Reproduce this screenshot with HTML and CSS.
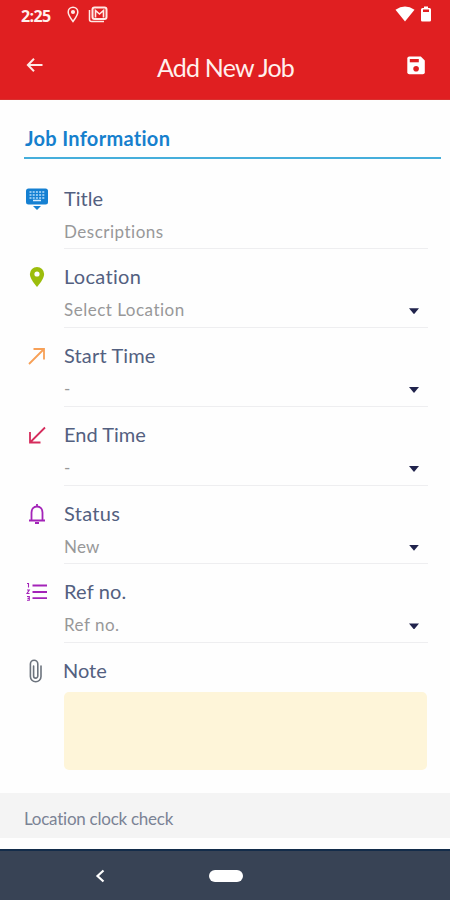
FILE: index.html
```
<!DOCTYPE html>
<html lang="en">
<head>
<meta charset="utf-8">
<title>Add New Job</title>
<link rel="stylesheet" href="styles.css">
</head>
<body>
<header class="top">
  <div class="status">
    <span class="clock">2:25</span>
    <svg class="s-pin" width="12" height="17" viewBox="0 0 12 17" fill="none" stroke="#ffe9e5" stroke-width="1.5"><path d="M6 15.5C3 11.5 1.2 9 1.2 6a4.8 4.8 0 0 1 9.6 0c0 3-1.800 5.500-4.800 9.500Z"/><circle cx="6" cy="6" r="1.300" fill="#ffe9e5"/></svg>
    <svg class="s-mail" width="20" height="17" viewBox="0 0 20 17" fill="none" stroke="#ffe9e5"><path d="M1.500 4v9.500q0 2 2 2H16" stroke-width="1.500"/><rect x="4.500" y="1.500" width="14" height="11.500" rx="2" stroke-width="2"/><path d="M7.500 11.500V4.500l4 3.500 4-3.500v7" stroke-width="1.600"/></svg>
    <svg class="s-wifi" width="20" height="16" viewBox="0 0 20 16" fill="#fff"><path d="M.5 3.800Q10-3 19.500 3.800L10 15.600Z"/></svg>
    <svg class="s-batt" width="10" height="16" viewBox="0 0 10 16"><path d="M3 .5h4V2h1.500Q10 2 10 3.500v10.700q0 1.300-1.300 1.300H1.300Q0 15.500 0 14.200V3.500Q0 2 1.500 2H3Z" fill="#fff"/><rect x="2" y="3.500" width="6" height="2.500" fill="#e01f21"/></svg>
  </div>
  <div class="bar">
    <svg class="back" width="18" height="16" viewBox="0 0 18 16" fill="none" stroke="#ffe9e5" stroke-width="2"><path d="M16.500 8H2M8 1.800 1.900 8 8 14.200"/></svg>
    <h1>Add New Job</h1>
    <svg class="save" width="18" height="19" viewBox="0 0 18 19"><path d="M2.300.5h11.500L17.800 4.500v11.700q0 2-2 2H2.300q-2 0-2-2V2.500q0-2 2-2Z" fill="#fff"/><rect x="2.800" y="3" width="9" height="3.300" fill="#e01f21"/><circle cx="9.100" cy="12.800" r="2.800" fill="#e01f21"/></svg>
  </div>
</header>
<main>
  <h2><span>Job Information</span></h2>
  <section class="row">
    <svg class="icon" width="24" height="24" viewBox="0 0 24 24"><rect x="1" y="1.500" width="22" height="16" rx="2.500" fill="#1580d2"/><path d="M8 19h8L12 23Z" fill="#1580d2"/><path d="M4.500 5h15M4.500 8h15M4.500 11h15" stroke="#8fc6f1" stroke-width="2" stroke-dasharray="2 1.200"/><path d="M8 13.500h8" stroke="#d8edff" stroke-width="1.500"/></svg>
    <div class="field"><div class="label">Title</div><div class="value v-desc">Descriptions</div></div>
  </section>
  <section class="row">
    <svg class="icon" width="24" height="24" viewBox="0 0 24 24"><path d="M12 22C7.500 16.500 4.900 12.500 4.900 9a7.100 7.100 0 0 1 14.200 0c0 3.500-2.600 7.500-7.100 13Z" fill="#9cbd0c"/><circle cx="12" cy="9" r="2.600" fill="#fff"/></svg>
    <div class="field"><div class="label l-loc">Location</div><div class="value v-loc">Select Location<i class="caret"></i></div></div>
  </section>
  <section class="row">
    <svg class="icon" width="24" height="24" viewBox="0 0 24 24" fill="none" stroke="#f7a057" stroke-width="1.800"><path d="M4 20 19 5M8.500 5H19v10.500"/></svg>
    <div class="field"><div class="label l-time">Start Time</div><div class="value">-<i class="caret"></i></div></div>
  </section>
  <section class="row">
    <svg class="icon" width="24" height="24" viewBox="0 0 24 24" fill="none" stroke="#d52c5c" stroke-width="1.800"><path d="M20 4.500 5 19.500M5 9v10.500h10.500"/></svg>
    <div class="field"><div class="label">End Time</div><div class="value">-<i class="caret"></i></div></div>
  </section>
  <section class="row">
    <svg class="icon" width="24" height="24" viewBox="0 0 24 24" fill="none" stroke="#a323b8" stroke-width="1.800"><path d="M4 18.500h16M6.500 18V10.500C6.500 7 8.800 4.500 12 4.500s5.500 2.500 5.500 6V18M12 4.500V2"/><path d="M10 21h4" stroke-width="2"/></svg>
    <div class="field"><div class="label l-stat">Status</div><div class="value">New<i class="caret"></i></div></div>
  </section>
  <section class="row">
    <svg class="icon" width="24" height="24" viewBox="0 0 24 24" fill="none" stroke="#a323b8"><path d="M7.500 5.500H22M7.500 12H22M7.500 18.200H22" stroke-width="1.800"/><path d="M2 3.500h1.500v4M2 10h2.300L2 13.500h2.500M2 16.500h2.300v3.800H2M2.500 18.400h2" stroke-width="1.100"/></svg>
    <div class="field"><div class="label l-time">Ref no.</div><div class="value v-ref">Ref no.<i class="caret"></i></div></div>
  </section>
  <section class="row note">
    <svg class="icon" width="24" height="24" viewBox="0 0 24 24" fill="none" stroke="#6c737d" stroke-width="1.600" stroke-linecap="round"><path d="M17 7v10.500a5.300 5.300 0 0 1-10.600 0V5a3.700 3.700 0 0 1 7.400 0v12a2.100 2.100 0 0 1-4.200 0V7"/></svg>
    <div class="field"><div class="label">Note</div><div class="memo"></div></div>
  </section>
</main>
<div class="check"><span>Location clock check</span></div>
<nav>
  <svg width="10" height="14" viewBox="0 0 10 14" fill="none" stroke="#fff" stroke-width="2.200"><path d="M8.500 1.500 2.500 7l6 5.500"/></svg>
  <div class="home"></div>
</nav>
</body>
</html>
```
FILE: styles.css
```
* { box-sizing: border-box; }
body { margin: 0; width: 450px; height: 900px; overflow: hidden; background: #fefefe; font-family: Lato, "Open Sans", sans-serif; font-variant-ligatures: none; display: flex; flex-direction: column; }
svg { display: block; flex: none; }
.top { height: 100px; background: #e01f21; color: #fff0ed; border-bottom: 1px solid #d9312f; flex: none; }
.status { height: 32px; display: flex; align-items: flex-start; padding: 6px 19px 0 21px; }
.clock { width: 46px; font: 700 16px/20px "Open Sans", sans-serif; letter-spacing: -0.6px; }
.s-mail { margin-left: 9px; }
.s-wifi { margin-left: auto; }
.s-batt { margin-left: 6px; }
.bar { height: 68px; display: flex; align-items: center; padding: 0 25px 2px 26px; }
h1 { flex: 1; margin: 3px 0 0; text-align: center; font: 400 25px/32px Lato, sans-serif; letter-spacing: -0.8px; }
main { height: 693px; flex: none; padding: 24px 9px 0 24px; }
h2 { margin: 0 0 12px; height: 34.5px; border-bottom: 2px solid #45aedb; color: #1680cd; font: 700 20px/28px Lato, sans-serif; letter-spacing: 0.3px; padding-left: 1px; }
.row { display: flex; height: 78.8px; padding-right: 13px; }
.icon { margin: 16px 0 0 1px; }
.field { flex: 1; margin-left: 15px; padding-top: 13px; border-bottom: 1px solid #eeeef0; }
.label { height: 28px; color: #536080; font-size: 20px; line-height: 28px; }
.l-loc, .l-stat { letter-spacing: 0.3px; }
.l-time { letter-spacing: 0.15px; }
.value { margin-top: 8px; height: 24px; font-size: 17px; line-height: 24px; color: #989899; display: flex; justify-content: space-between; align-items: center; letter-spacing: 0.2px; }
.v-desc { letter-spacing: 0.5px; }
.v-loc { letter-spacing: 0.5px; }
.v-ref { letter-spacing: 0.5px; }
.caret { width: 10px; height: 6px; margin: 2px 9px 0 0; background: #20234c; clip-path: polygon(0 0, 100% 0, 50% 100%); }
.note { height: 128px; }
.note .icon { margin-left: 0; }
.note .field { margin-left: 16px; border: 0; }
.note .label { margin-left: -1px; }
.memo { height: 78px; margin: 8px 1px 0 0; border-radius: 5px; background: #fef5d9; }
.check { height: 45px; flex: none; background: #f4f4f4; padding: 14px 24px; color: #7b8395; font-size: 17px; line-height: 24px; letter-spacing: -0.25px; }
nav { margin-top: 11px; height: 51px; flex: none; background: #384355; border-top: 2px solid #132c4a; display: flex; align-items: center; padding: 1px 0 0 95px; }
.home { width: 34px; height: 12px; margin-left: 104px; border-radius: 6px; background: #fff; }
```
